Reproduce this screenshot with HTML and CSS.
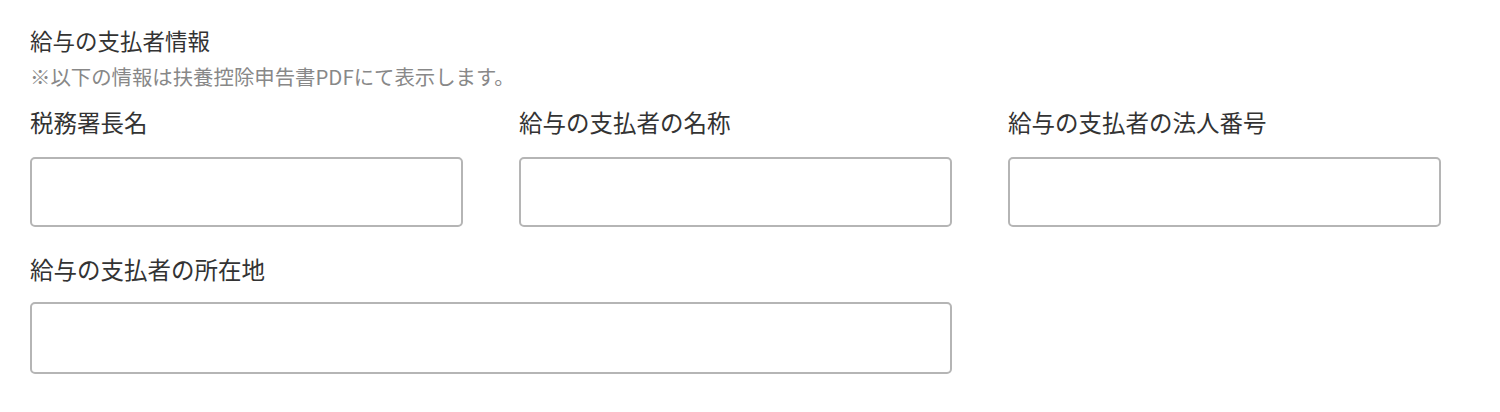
FILE: index.html
```html
<!DOCTYPE html>
<html lang="ja">
<head>
<meta charset="utf-8">
<title>給与の支払者情報</title>
<link rel="stylesheet" href="styles.css">
</head>
<body>
<section class="payer">
  <h2 class="payer-title">給与の支払者情報</h2>
  <p class="payer-note">※以下の情報は扶養控除申告書PDFにて表示します。</p>
  <div class="fields">
    <label class="field">
      <span class="field-label">税務署長名</span>
      <input class="field-input" type="text">
    </label>
    <label class="field">
      <span class="field-label">給与の支払者の名称</span>
      <input class="field-input" type="text">
    </label>
    <label class="field">
      <span class="field-label">給与の支払者の法人番号</span>
      <input class="field-input" type="text">
    </label>
    <label class="field field-wide">
      <span class="field-label">給与の支払者の所在地</span>
      <input class="field-input" type="text">
    </label>
  </div>
</section>
</body>
</html>
```
FILE: styles.css
```css
* { box-sizing: border-box; }

body {
  margin: 0;
  background: #fff;
  font-family: "Noto Sans CJK JP", "Noto Sans", sans-serif;
  color: #333;
}

.payer {
  padding: 25px 30px 0;
  width: 1441px;
}

.payer-title {
  margin: 0;
  font-size: 22.5px;
  font-weight: 400;
  line-height: 30px;
}

.payer-note {
  margin: 7px 0 0;
  font-size: 20.4px;
  line-height: 28px;
  color: #888;
}

.fields {
  display: grid;
  grid-template-columns: repeat(3, 433px);
  column-gap: 56px;
  row-gap: 27px;
  margin-top: 17px;
}

.field {
  display: flex;
  flex-direction: column;
  gap: 20px;
}

.field-wide {
  grid-column: span 2;
  gap: 18px;
}

.field-label {
  font-size: 23.5px;
  line-height: 30px;
}

.field-input {
  height: 70px;
  border: 2px solid #b5b5b5;
  border-radius: 5px;
  background: #fff;
  font: inherit;
  font-size: 20px;
  padding: 0 12px;
  outline: none;
}

.field-wide .field-input {
  height: 72px;
}
```
